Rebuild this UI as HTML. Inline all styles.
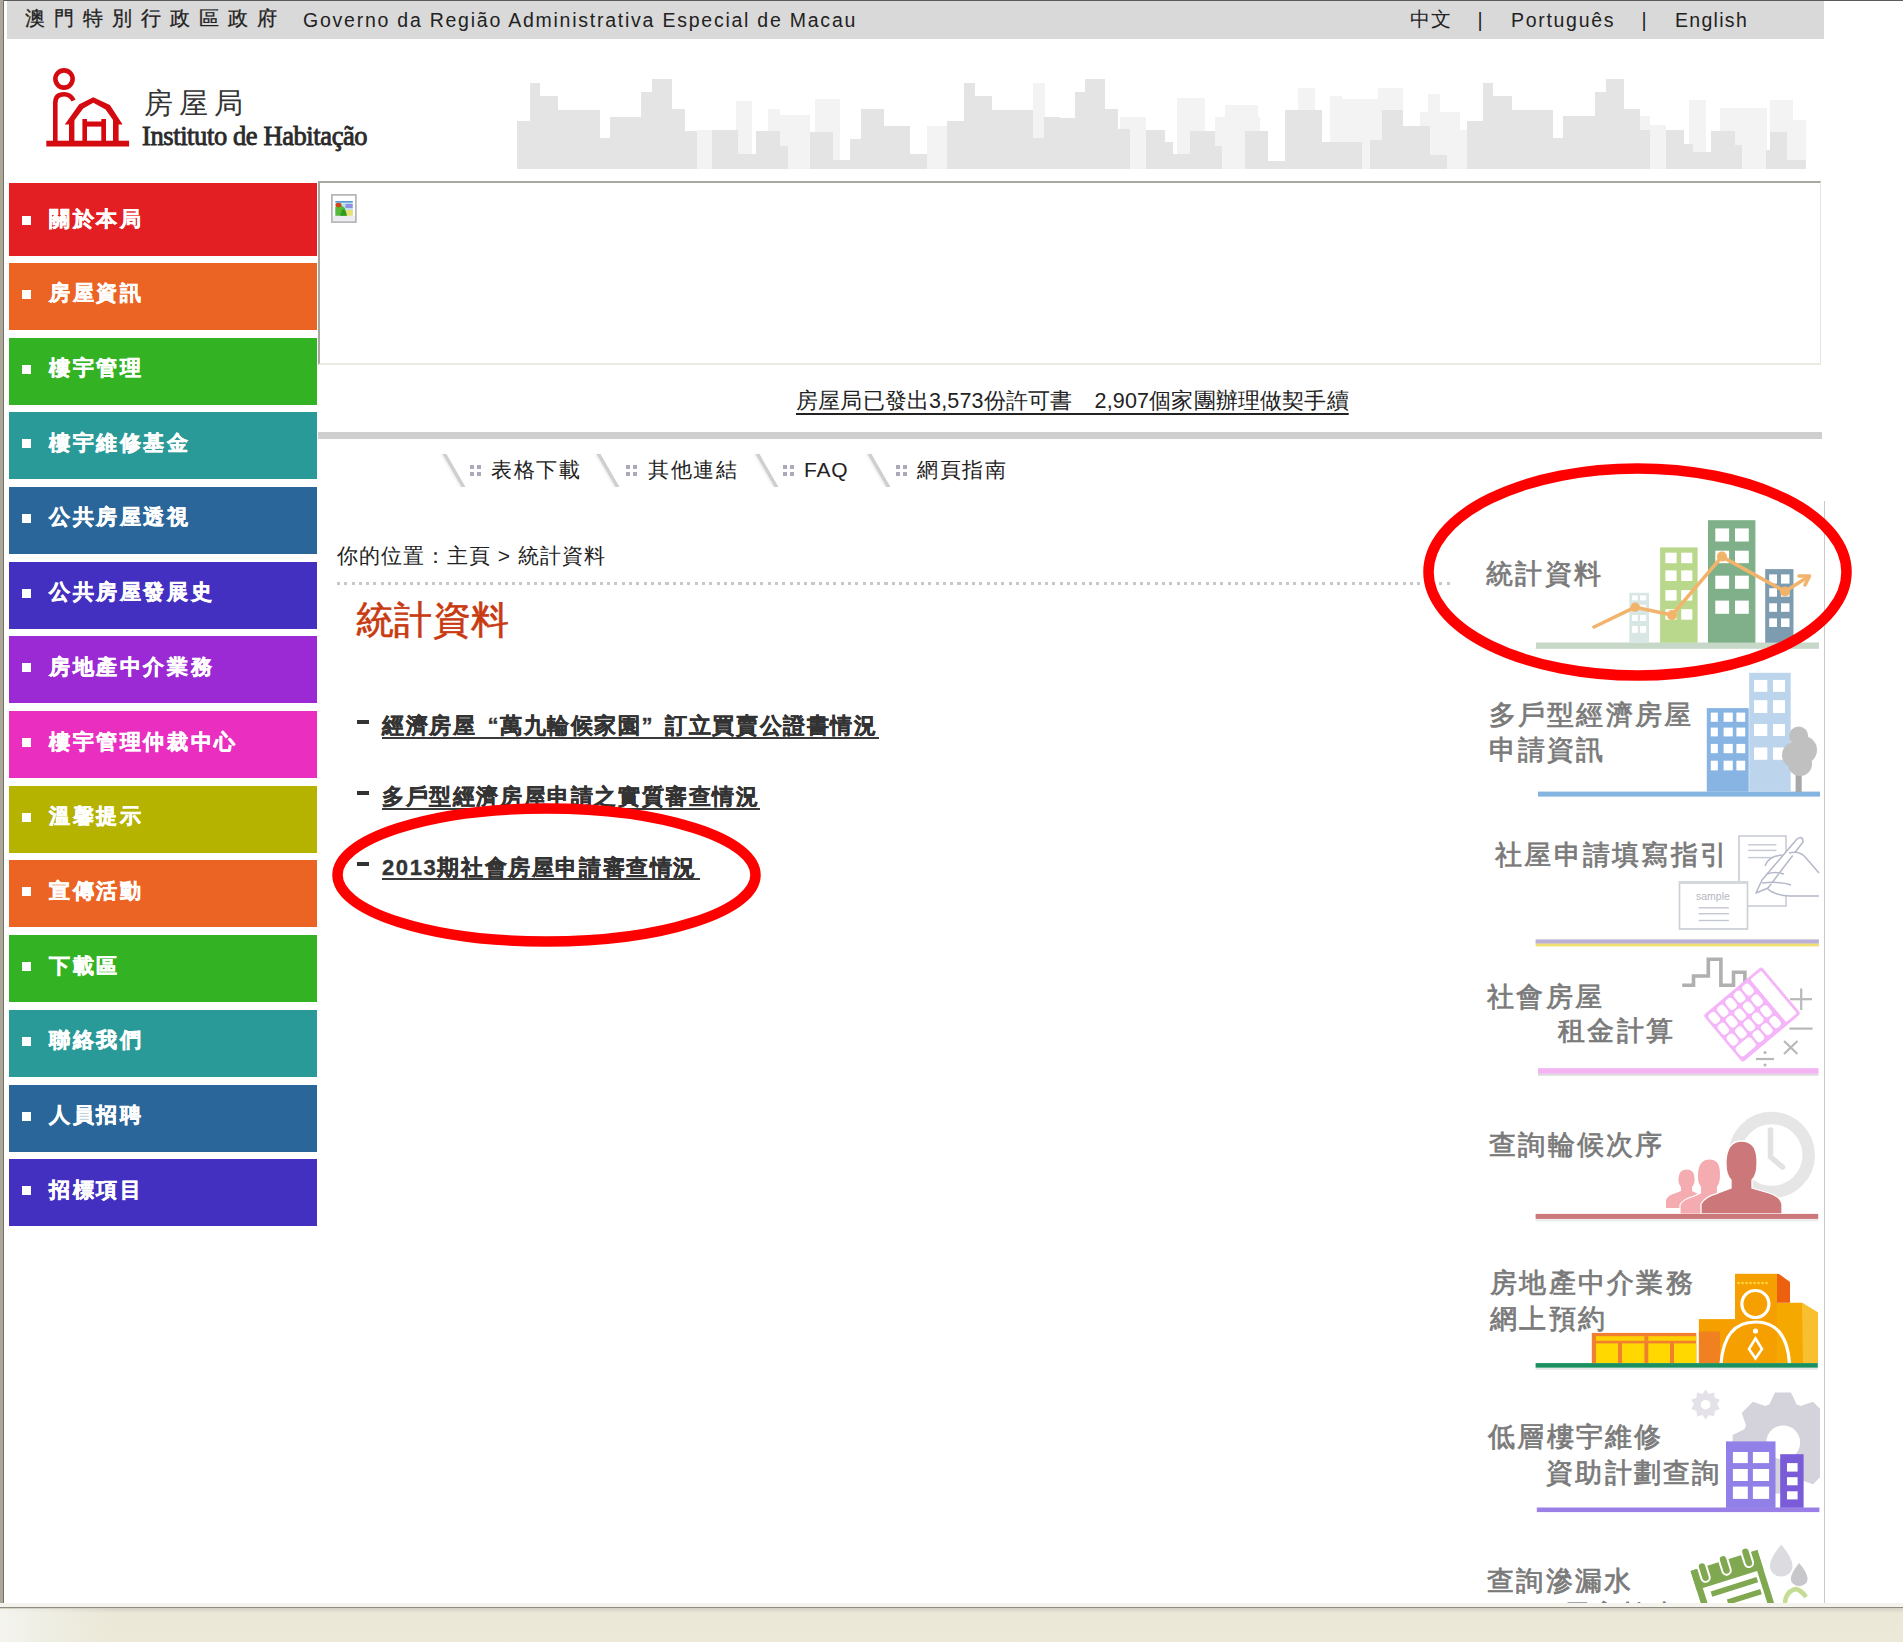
<!DOCTYPE html>
<html><head><meta charset="utf-8">
<style>
html,body{margin:0;padding:0;background:#fff;width:1903px;height:1642px;overflow:hidden;position:relative;font-family:"Liberation Sans",sans-serif;}
.a{position:absolute;white-space:nowrap;}
.mi{position:absolute;left:9px;width:308px;height:67px;}
.mi .b{position:absolute;left:13px;top:27px;width:9px;height:9px;background:#fff;}
.mi .t{position:absolute;left:40px;top:19.5px;font-size:21px;line-height:21px;font-weight:900;color:#fff;letter-spacing:2.6px;-webkit-text-stroke:0.45px #fff;}
.tab{position:absolute;top:459px;font-size:21px;line-height:21px;color:#222;letter-spacing:1.5px;}
.sl{position:absolute;width:3.6px;height:33px;top:454px;background:#cfcfcf;box-shadow:-2px 0 2px #f0f0f0;transform:skewX(30deg);}
.dots{position:absolute;width:11px;height:11px;background:
 radial-gradient(#aab 0,#aab 0) 0 0/4px 4px no-repeat,
 radial-gradient(#aab 0,#aab 0) 7px 0/4px 4px no-repeat,
 radial-gradient(#aab 0,#aab 0) 0 7px/4px 4px no-repeat,
 radial-gradient(#aab 0,#aab 0) 7px 7px/4px 4px no-repeat;}
.lnk{position:absolute;left:382px;font-size:22px;line-height:22px;font-weight:bold;color:#333;letter-spacing:1.6px;-webkit-text-stroke:0.35px #333;}
.ul{position:absolute;left:382px;height:2px;background:#3a3a3a;}
.q{display:inline-block;width:23.6px;}
.dash{position:absolute;left:357px;width:12px;height:4px;background:#333;}
.rt{position:absolute;font-size:27px;line-height:27px;color:#7a7a7a;-webkit-text-stroke:0.75px #7a7a7a;letter-spacing:2.3px;margin-top:1.5px;}
</style></head><body>

<!-- window top line and left frame -->
<div class="a" style="left:0;top:0;width:1903px;height:1px;background:#5a5a5a"></div>
<div class="a" style="left:0;top:0;width:2.5px;height:1603px;background:#aca899"></div>
<div class="a" style="left:2.5px;top:0;width:1.3px;height:1603px;background:#716f64"></div>

<!-- top gray bar -->
<div class="a" style="left:7px;top:1px;width:1817px;height:38px;background:#d9d9d9"></div>
<div class="a" style="left:25px;top:7px;font-size:20px;line-height:22px;color:#222;letter-spacing:9px;-webkit-text-stroke:0.3px #222">澳門特別行政區政府</div>
<div class="a" style="left:303px;top:8.5px;font-size:19.5px;line-height:22px;color:#222;letter-spacing:1.76px">Governo da Região Administrativa Especial de Macau</div>
<div class="a" style="left:1410px;top:8px;font-size:20px;line-height:22px;color:#222;letter-spacing:1px">中文</div>
<div class="a" style="left:1477.5px;top:8.5px;font-size:19.5px;line-height:22px;color:#222;">|</div>
<div class="a" style="left:1511px;top:8.5px;font-size:19.5px;line-height:22px;color:#222;letter-spacing:1.7px">Português</div>
<div class="a" style="left:1641.5px;top:8.5px;font-size:19.5px;line-height:22px;color:#222;">|</div>
<div class="a" style="left:1675px;top:8.5px;font-size:19.5px;line-height:22px;color:#222;letter-spacing:1.3px">English</div>

<!-- LOGO -->
<svg class="a" style="left:0;top:40px" width="500" height="140" viewBox="0 40 500 140">
 <g fill="none" stroke="#d50a10" stroke-width="4.6">
  <circle cx="64" cy="79" r="8.6"/>
  <path d="M55.3 142 V103 Q55.3 94.3 64 94.3 Q70.3 94.3 73.6 100.5"/>
 </g>
 <g fill="#d50a10">
  <polygon points="64.8,124.6 79.2,104.2 93.3,97.2 109.9,104.9 122.6,124.6 116.2,124.6 105.6,109.4 93.3,102.8 83.2,108.6 71.2,124.6"/>
  <rect x="69" y="120" width="5.4" height="22"/>
  <rect x="113" y="120" width="5.6" height="22"/>
  <rect x="82.4" y="119" width="4.6" height="23"/>
  <rect x="101.3" y="119" width="4.7" height="23"/>
  <rect x="84" y="121.5" width="20" height="5.1"/>
  <rect x="46.3" y="140.7" width="82.8" height="5.8"/>
 </g>
 <text x="143.5" y="112.7" font-family="Liberation Serif, serif" font-size="29" fill="#333" letter-spacing="6">房屋局</text>
 <text x="142" y="144.5" font-family="Liberation Serif" font-size="26.5" fill="#2a2a2a" stroke="#2a2a2a" stroke-width="0.85" letter-spacing="-0.4">Instituto de Habitação</text>
</svg>

<!-- SKYLINE -->
<svg class="a" style="left:0;top:0" width="1903" height="180">
 <g fill="#f3f3f3">
  <rect x="697" y="130" width="15" height="39"/><rect x="736" y="101" width="16" height="68"/><rect x="768" y="109" width="12" height="60"/>
  <rect x="780" y="115" width="30" height="54"/><rect x="815" y="99" width="25" height="70"/><rect x="927" y="126" width="20" height="43"/>
  <rect x="1033" y="83" width="12" height="86"/><rect x="1120" y="117" width="26" height="52"/><rect x="1177" y="98" width="28" height="71"/>
  <rect x="1225" y="105" width="33" height="64"/><rect x="1298" y="88" width="17" height="81"/><rect x="1330" y="96" width="12" height="73"/>
  <rect x="1340" y="99" width="38" height="70"/><rect x="1378" y="88" width="25" height="81"/><rect x="1420" y="112" width="40" height="57"/>
  <rect x="1428" y="94" width="12" height="75"/><rect x="1640" y="116" width="10" height="53"/><rect x="1689" y="100" width="17" height="69"/>
  <rect x="1720" y="108" width="47" height="61"/><rect x="1770" y="100" width="23" height="69"/><rect x="1460" y="130" width="7" height="39"/><rect x="1215" y="117" width="45" height="52"/><rect x="1640" y="125" width="26" height="44"/><rect x="1790" y="120" width="16" height="49"/>
 </g>
 <g fill="#e4e4e4">
  <rect x="517" y="121" width="13" height="48"/><rect x="530" y="83" width="10" height="86"/><rect x="540" y="96" width="18" height="73"/>
  <rect x="558" y="110" width="42" height="59"/><rect x="600" y="138" width="10" height="31"/><rect x="610" y="117" width="31" height="52"/>
  <rect x="641" y="92" width="11" height="77"/><rect x="652" y="79" width="20" height="90"/><rect x="672" y="109" width="13" height="60"/>
  <rect x="685" y="131" width="12" height="38"/><rect x="712" y="130" width="26" height="39"/><rect x="738" y="154" width="18" height="15"/>
  <rect x="756" y="131" width="24" height="38"/><rect x="780" y="146" width="8" height="23"/>
  <rect x="810" y="132" width="23" height="37"/><rect x="833" y="160" width="17" height="9"/><rect x="850" y="139" width="11" height="30"/>
  <rect x="861" y="109" width="23" height="60"/><rect x="884" y="126" width="26" height="43"/><rect x="910" y="154" width="17" height="15"/>
  <rect x="947" y="121" width="17" height="48"/><rect x="964" y="83" width="11" height="86"/><rect x="975" y="96" width="17" height="73"/>
  <rect x="992" y="110" width="41" height="59"/><rect x="1044" y="117" width="16" height="52"/><rect x="1033" y="138" width="11" height="31"/>
  <rect x="1060" y="118" width="15" height="51"/><rect x="1075" y="92" width="10" height="77"/><rect x="1085" y="79" width="20" height="90"/>
  <rect x="1105" y="109" width="13" height="60"/><rect x="1112" y="129" width="18" height="40"/><rect x="1146" y="130" width="19" height="39"/>
  <rect x="1165" y="142" width="8" height="27"/><rect x="1173" y="154" width="17" height="15"/><rect x="1190" y="131" width="25" height="38"/>
  <rect x="1215" y="146" width="7" height="23"/><rect x="1245" y="131" width="23" height="38"/><rect x="1268" y="161" width="17" height="8"/>
  <rect x="1285" y="110" width="37" height="59"/><rect x="1322" y="142" width="40" height="27"/><rect x="1370" y="140" width="12" height="29"/>
  <rect x="1382" y="110" width="21" height="59"/><rect x="1403" y="126" width="27" height="43"/><rect x="1430" y="155" width="17" height="14"/>
  <rect x="1467" y="121" width="16" height="48"/><rect x="1483" y="83" width="10" height="86"/><rect x="1493" y="96" width="19" height="73"/>
  <rect x="1512" y="110" width="41" height="59"/><rect x="1553" y="138" width="10" height="31"/><rect x="1563" y="116" width="32" height="53"/>
  <rect x="1595" y="92" width="11" height="77"/><rect x="1606" y="79" width="18" height="90"/><rect x="1624" y="109" width="16" height="60"/>
  <rect x="1632" y="130" width="18" height="39"/><rect x="1666" y="130" width="18" height="39"/><rect x="1684" y="144" width="9" height="25"/>
  <rect x="1693" y="152" width="18" height="17"/><rect x="1711" y="131" width="24" height="38"/><rect x="1735" y="145" width="7" height="24"/>
  <rect x="1766" y="150" width="4" height="19"/><rect x="1770" y="132" width="17" height="37"/><rect x="1787" y="160" width="19" height="9"/>
 </g>
</svg>

<!-- MENU -->
<div class="mi" style="top:183px;height:73px;background:#e31f23"><div class="b" style="top:33px"></div><div class="t" style="top:25px">關於本局</div></div>
<div class="mi" style="top:262.8px;background:#ec6424"><div class="b"></div><div class="t">房屋資訊</div></div>
<div class="mi" style="top:337.5px;background:#33b324"><div class="b"></div><div class="t">樓宇管理</div></div>
<div class="mi" style="top:412.2px;background:#2a9a98"><div class="b"></div><div class="t">樓宇維修基金</div></div>
<div class="mi" style="top:486.9px;background:#2a6699"><div class="b"></div><div class="t">公共房屋透視</div></div>
<div class="mi" style="top:561.6px;background:#4430c0"><div class="b"></div><div class="t">公共房屋發展史</div></div>
<div class="mi" style="top:636.3px;background:#9b2ad4"><div class="b"></div><div class="t">房地產中介業務</div></div>
<div class="mi" style="top:711.0px;background:#e92ec0"><div class="b"></div><div class="t">樓宇管理仲裁中心</div></div>
<div class="mi" style="top:785.7px;background:#b5b300"><div class="b"></div><div class="t">溫馨提示</div></div>
<div class="mi" style="top:860.4px;background:#ec6424"><div class="b"></div><div class="t">宣傳活動</div></div>
<div class="mi" style="top:935.1px;background:#33b324"><div class="b"></div><div class="t">下載區</div></div>
<div class="mi" style="top:1009.8px;background:#2a9a98"><div class="b"></div><div class="t">聯絡我們</div></div>
<div class="mi" style="top:1084.5px;background:#2a6699"><div class="b"></div><div class="t">人員招聘</div></div>
<div class="mi" style="top:1159.2px;background:#4430c0"><div class="b"></div><div class="t">招標項目</div></div>

<!-- BANNER BOX -->
<div class="a" style="left:318px;top:181px;width:1503px;height:184px;border-top:2px solid #a8a8a0;border-left:2px solid #a8a8a0;border-right:1px solid #e6e6dc;border-bottom:2px solid #ececE4;box-sizing:border-box"></div>
<svg class="a" style="left:331px;top:194px" width="26" height="29">
 <rect x="0.9" y="0.9" width="24" height="27.2" fill="#fff" stroke="#b0b0b0" stroke-width="1.6"/>
 <rect x="2" y="22" width="22" height="5" fill="#ececf2"/>
 <rect x="4.4" y="7" width="17.3" height="14.7" fill="#bfe0f4"/>
 <rect x="4.4" y="7" width="17.3" height="1.6" fill="#5a9ad0"/>
 <rect x="14.5" y="10" width="7.2" height="4" fill="#9090e0"/>
 <rect x="14.5" y="16" width="7.2" height="5.7" fill="#e8e070"/>
 <path d="M4.4 21.7 V13 Q9 9 14 14 L15 21.7 Z" fill="#58b838"/>
 <path d="M9 21.7 L11 16 Q13.5 14 15 18 L16 21.7 Z" fill="#2f9a20"/>
 <ellipse cx="7.5" cy="11" rx="3" ry="2.2" fill="#d04418"/>
</svg>
<!-- announcement -->
<div class="a" style="left:796px;top:389.5px;font-size:21.5px;line-height:22px;color:#222;letter-spacing:0.17px;text-decoration:underline;text-underline-offset:4.5px;text-decoration-thickness:1.5px">房屋局已發出3,573份許可書　2,907個家團辦理做契手續</div>

<!-- gray bar -->
<div class="a" style="left:318px;top:432px;width:1504px;height:7px;background:#cfcfcf"></div>

<!-- TABS -->
<div class="sl" style="left:451.7px"></div><div class="dots" style="left:470px;top:465px"></div><div class="tab" style="left:491px">表格下載</div>
<div class="sl" style="left:606.4px"></div><div class="dots" style="left:626px;top:465px"></div><div class="tab" style="left:648px">其他連結</div>
<div class="sl" style="left:765.2px"></div><div class="dots" style="left:783px;top:465px"></div><div class="tab" style="left:804px;letter-spacing:0.8px">FAQ</div>
<div class="sl" style="left:877.2px"></div><div class="dots" style="left:896px;top:465px"></div><div class="tab" style="left:917px">網頁指南</div>

<!-- breadcrumb -->
<div class="a" style="left:337px;top:545px;font-size:21px;line-height:22px;color:#222;letter-spacing:1px">你的位置：主頁 &gt; 統計資料</div>
<div class="a" style="left:337px;top:582px;width:1115px;height:3px;background:repeating-linear-gradient(90deg,#c8c8c8 0,#c8c8c8 3px,transparent 3px,transparent 7.3px)"></div>
<div class="a" style="left:356px;top:600.5px;font-size:38px;line-height:38px;color:#c83a10;-webkit-text-stroke:0.6px #c83a10;letter-spacing:0.3px">統計資料</div>

<!-- links -->
<div class="dash" style="top:720px"></div><div class="lnk" style="top:715px">經濟房屋<span class="q" style="text-align:right">“</span>萬九輪候家園<span class="q" style="text-align:left">”</span>訂立買賣公證書情況</div>
<div class="dash" style="top:791px"></div><div class="lnk" style="top:786px">多戶型經濟房屋申請之實質審查情況</div>
<div class="dash" style="top:862px"></div><div class="lnk" style="top:857px">2013期社會房屋申請審查情況</div>
<div class="ul" style="top:737px;width:497px"></div><div class="ul" style="top:807.5px;width:378px"></div><div class="ul" style="top:878.2px;width:318px"></div>

<!-- RIGHT PANEL -->
<div class="a" style="left:1824px;top:501px;width:1px;height:1102px;background:#c8c8c8"></div>


<!-- RIGHT PANEL CARDS -->
<div class="rt" style="left:1486px;top:559px">統計資料</div>
<div class="rt" style="left:1488.5px;top:700px">多戶型經濟房屋</div>
<div class="rt" style="left:1488.5px;top:735px">申請資訊</div>
<div class="rt" style="left:1495px;top:840px">社屋申請填寫指引</div>
<div class="rt" style="left:1487px;top:982px">社會房屋</div>
<div class="rt" style="left:1558px;top:1016px">租金計算</div>
<div class="rt" style="left:1489px;top:1130px">查詢輪候次序</div>
<div class="rt" style="left:1490px;top:1268px">房地產中介業務</div>
<div class="rt" style="left:1490px;top:1304px">網上預約</div>
<div class="rt" style="left:1488px;top:1422px">低層樓宇維修</div>
<div class="rt" style="left:1546px;top:1458px">資助計劃查詢</div>
<div class="a" style="left:1460px;top:1500px;width:364px;height:103px;overflow:hidden">
 <div class="rt" style="left:27px;top:66px">查詢滲漏水</div>
 <div class="rt" style="left:103px;top:100px">屋宇檢查</div>
</div>
<svg class="a" style="left:0;top:0" width="1903" height="1603">
 <!-- card1 stats -->
 <rect x="1536" y="642.5" width="283" height="6.3" fill="#c8d8c8"/>
 <rect x="1629.3" y="592.8" width="19.7" height="50" fill="#d8e6e4"/>
 <g fill="#fff"><rect x="1632" y="595.4" width="5.8" height="5"/><rect x="1640" y="595.4" width="6.2" height="5"/><rect x="1632" y="604.6" width="5.8" height="5.4"/><rect x="1640" y="604.6" width="6.2" height="5.4"/><rect x="1632" y="615" width="5.8" height="6"/><rect x="1640" y="615" width="6.2" height="6"/><rect x="1632" y="626" width="5.8" height="6.8"/><rect x="1640" y="626" width="6.2" height="6.8"/></g>
 <rect x="1660.1" y="547.4" width="37.5" height="95.3" fill="#bad88c"/>
 <g fill="#fff"><rect x="1665.4" y="552.7" width="11.2" height="10.5"/><rect x="1681.2" y="552.7" width="11.1" height="10.5"/><rect x="1665.4" y="570.4" width="11.2" height="10.6"/><rect x="1681.2" y="570.4" width="11.1" height="10.6"/><rect x="1665.4" y="590.1" width="11.2" height="10.5"/><rect x="1681.2" y="590.1" width="11.1" height="10.5"/><rect x="1665.4" y="609.2" width="11.2" height="10.5"/><rect x="1681.2" y="609.2" width="11.1" height="10.5"/></g>
 <rect x="1708" y="520.2" width="47.4" height="122.5" fill="#80b08a"/>
 <g fill="#fff"><rect x="1715.3" y="528.4" width="13.8" height="13.1"/><rect x="1735" y="528.4" width="13.8" height="13.1"/><rect x="1715.3" y="550.7" width="13.8" height="12.5"/><rect x="1735" y="550.7" width="13.8" height="12.5"/><rect x="1715.3" y="575.7" width="13.8" height="13.1"/><rect x="1735" y="575.7" width="13.8" height="13.1"/><rect x="1715.3" y="600.6" width="13.8" height="13.2"/><rect x="1735" y="600.6" width="13.8" height="13.2"/></g>
 <rect x="1765.2" y="569.1" width="28.3" height="73.6" fill="#7e9cb0"/>
 <g fill="#fff"><rect x="1769.2" y="574.4" width="7.8" height="9.2"/><rect x="1781" y="574.4" width="8.5" height="9.2"/><rect x="1769.2" y="588.2" width="7.8" height="8.5"/><rect x="1781" y="588.2" width="8.5" height="8.5"/><rect x="1769.2" y="603.3" width="7.8" height="8.5"/><rect x="1781" y="603.3" width="8.5" height="8.5"/><rect x="1769.2" y="618.4" width="7.8" height="8.6"/><rect x="1781" y="618.4" width="8.5" height="8.6"/></g>
 <g stroke="#f2b46c" fill="none" stroke-width="3.6" stroke-linejoin="round" stroke-linecap="round"><polyline points="1594,627 1635.2,607.2 1672,615.1 1721.9,556.6 1785,591.5 1807,577.5"/><polyline points="1799,576 1809.5,576 1805,585"/></g>
 <g fill="#f2b36a"><circle cx="1635.2" cy="607.2" r="4.6"/><circle cx="1672" cy="615.1" r="5"/><circle cx="1721.9" cy="556.6" r="5"/><circle cx="1785" cy="591.5" r="5"/></g>

 <!-- card2 buildings -->
 <rect x="1538" y="791.6" width="282" height="5" fill="#86b4e0"/>
 <rect x="1749.2" y="672.8" width="41.5" height="119" fill="#bcd4ec"/>
 <g fill="#fff"><rect x="1754" y="679.9" width="13.3" height="11.9"/><rect x="1773" y="679.9" width="12" height="11.9"/><rect x="1754" y="700.2" width="13.3" height="12.8"/><rect x="1773" y="700.2" width="12" height="12.8"/><rect x="1754" y="724" width="13.3" height="12"/><rect x="1773" y="724" width="12" height="12"/><rect x="1754" y="747.5" width="13.3" height="12.3"/><rect x="1773" y="747.5" width="12" height="12.3"/></g>
 <rect x="1706.8" y="708.1" width="41.9" height="83.6" fill="#88b4e4"/>
 <g fill="#fff"><rect x="1710.8" y="712.6" width="7" height="9.2"/><rect x="1723.6" y="712.6" width="9.2" height="9.2"/><rect x="1736.4" y="712.6" width="8.8" height="9.2"/><rect x="1710.8" y="727.6" width="7" height="8.8"/><rect x="1723.6" y="727.6" width="9.2" height="8.8"/><rect x="1736.4" y="727.6" width="8.8" height="8.8"/><rect x="1710.8" y="743.9" width="7" height="9.3"/><rect x="1723.6" y="743.9" width="9.2" height="9.3"/><rect x="1736.4" y="743.9" width="8.8" height="9.3"/><rect x="1710.8" y="760.7" width="7" height="9.7"/><rect x="1723.6" y="760.7" width="9.2" height="9.7"/><rect x="1736.4" y="760.7" width="8.8" height="9.7"/></g>
 <rect x="1795.6" y="750" width="6.1" height="42" fill="#a8a8a8"/>
 <g fill="#c0c0c0"><circle cx="1798.7" cy="736" r="9.5"/><circle cx="1803" cy="750" r="14"/><circle cx="1795" cy="755" r="13"/><circle cx="1800" cy="764" r="12"/></g>

 <!-- card3 papers -->
 <rect x="1535.6" y="939.4" width="283.3" height="4.4" fill="#bab0d8"/>
 <rect x="1535.6" y="943.6" width="283.3" height="2.8" fill="#f0e070"/>
 <g fill="#fff" stroke="#c8ccd4" stroke-width="1.6"><rect x="1739" y="836" width="47" height="70"/></g>
 <g stroke="#c8ccd4" stroke-width="1.5"><line x1="1748.2" y1="844.8" x2="1776.4" y2="844.8"/><line x1="1748.2" y1="850.4" x2="1776.4" y2="850.4"/><line x1="1748.2" y1="857.6" x2="1778.5" y2="857.6"/></g>
 <rect x="1679.5" y="882" width="68" height="47" fill="#fff" stroke="#ccd0d6" stroke-width="1.7"/>
 <rect x="1679" y="881" width="69" height="3" fill="#d4d8dc"/>
 <text x="1696" y="900" font-family="Liberation Sans" font-size="10.5" fill="#b4b8c0">sample</text>
 <g stroke="#c4c8d0" stroke-width="1.4"><line x1="1698.6" y1="907.8" x2="1728.9" y2="907.8"/><line x1="1698.6" y1="913.7" x2="1728.9" y2="913.7"/><line x1="1698.6" y1="920.5" x2="1728.9" y2="920.5"/></g>
 <polygon points="1756,893 1762,878 1768,862 1773,857 1784,855 1800,851 1807,854 1819,869 1819,895 1797,891 1775,893.5 1768,885" fill="#fff"/>
 <g fill="#fff" stroke="#b4b8c8" stroke-width="1.5" stroke-linejoin="round">
  <path d="M1756 893 L1762 880 L1797 839 Q1803 835 1803 842 L1768 888 Z"/>
  <path d="M1789 853 Q1800 850 1806 858 L1819 873"/>
  <path d="M1767 874 Q1775 871 1784 874 M1762 883 Q1780 881 1791 885 M1767 888 Q1773 895 1790 896 L1819 896"/>
  <path d="M1765 866 Q1768 856 1782 855"/>
 </g>

 <!-- card4 calculator -->
 <rect x="1538" y="1068.2" width="280.5" height="5.6" fill="#f4b4f4"/>
 <rect x="1538" y="1073.8" width="280.5" height="2" fill="#dcdcdc"/>
 <polyline points="1682.2,985.3 1693.5,985.3 1693.5,976 1708.3,976 1708.3,959.3 1720.9,959.3 1720.9,985.3 1733.5,985.3 1733.5,972.3 1744.9,972.3 1744.9,983.2" fill="none" stroke="#b0b0b0" stroke-width="3.6"/>
 <g transform="translate(1752,1014.5) rotate(50)">
  <rect x="-30.7" y="-38" width="61.4" height="76" rx="3" fill="#f4b6f8"/>
  <rect x="-27.8" y="-35.2" width="55.6" height="14" rx="1.5" fill="#fff"/>
  <g fill="#fff"><rect x="-27.6" y="-17.2" width="12" height="8.6" rx="3.5"/><rect x="-13.5" y="-17.2" width="12" height="8.6" rx="3.5"/><rect x="0.6" y="-17.2" width="12" height="8.6" rx="3.5"/><rect x="14.7" y="-17.2" width="12" height="8.6" rx="3.5"/><rect x="-27.6" y="-6.2" width="12" height="8.6" rx="3.5"/><rect x="-13.5" y="-6.2" width="12" height="8.6" rx="3.5"/><rect x="0.6" y="-6.2" width="12" height="8.6" rx="3.5"/><rect x="14.7" y="-6.2" width="12" height="8.6" rx="3.5"/><rect x="-27.6" y="4.8" width="12" height="8.6" rx="3.5"/><rect x="-13.5" y="4.8" width="12" height="8.6" rx="3.5"/><rect x="0.6" y="4.8" width="12" height="8.6" rx="3.5"/><rect x="14.7" y="4.8" width="12" height="8.6" rx="3.5"/><rect x="-27.6" y="15.8" width="12" height="8.6" rx="3.5"/><rect x="-13.5" y="15.8" width="12" height="8.6" rx="3.5"/><rect x="0.6" y="15.8" width="12" height="8.6" rx="3.5"/><rect x="14.7" y="15.8" width="12" height="19.6" rx="3.5"/><rect x="-27.6" y="26.8" width="12" height="8.6" rx="3.5"/><rect x="-13.5" y="26.8" width="12" height="8.6" rx="3.5"/><rect x="0.6" y="26.8" width="12" height="8.6" rx="3.5"/></g>
 </g>
 <g stroke="#b8b8b8" stroke-width="2.2"><line x1="1801.2" y1="988.5" x2="1801.2" y2="1010"/><line x1="1790" y1="999.2" x2="1812" y2="999.2"/><line x1="1789.4" y1="1028.6" x2="1812.6" y2="1028.6"/><line x1="1784" y1="1041" x2="1797.5" y2="1054"/><line x1="1797.5" y1="1041" x2="1784" y2="1054"/><line x1="1756" y1="1059" x2="1774" y2="1059"/></g>
 <g fill="#b8b8b8"><circle cx="1765" cy="1052.5" r="1.6"/><circle cx="1765" cy="1065" r="1.6"/></g>

 <!-- card5 queue -->
 <circle cx="1771.7" cy="1155" r="37" fill="none" stroke="#e6e6e6" stroke-width="12.5"/>
 <polyline points="1770.5,1130 1770.5,1157 1782.5,1167" fill="none" stroke="#e2e2e2" stroke-width="5.5" stroke-linecap="round"/>
 <rect x="1535.6" y="1218.9" width="282.6" height="2.5" fill="#ececec"/>
 <g fill="#f5acb0">
  <path d="M1666 1208 L1666 1200 Q1668 1195 1676 1193 L1681 1191 L1681 1187 Q1678 1184 1678.5 1178 Q1679 1169.5 1686.5 1169.5 Q1694.5 1169.5 1694.5 1178 Q1695 1184 1692 1187 L1692 1191 L1700 1195 L1700 1208 Z"/>
  <path d="M1680 1214 L1680 1205 Q1683 1199 1693 1196.5 L1700.5 1193 L1700.5 1187 Q1696.5 1183 1697.5 1173 Q1698.5 1159 1709.5 1159 Q1720.5 1159 1720.5 1173 Q1721 1183 1717.5 1187 L1717.5 1193 L1730 1200 L1730 1214 Z" stroke="#fff" stroke-width="1.2"/>
 </g>
 <path d="M1701 1214 L1701 1204 Q1704 1197 1718 1193 L1731 1188 L1731 1180 Q1725.5 1175 1726 1161 Q1727 1141 1741.5 1141 Q1757 1141 1757 1161 Q1757.5 1175 1752 1180 L1752 1188 L1769 1193 Q1781 1197 1782 1204 L1782 1214 Z" fill="#cc787a" stroke="#fff" stroke-width="1.3"/>

 <rect x="1535.6" y="1213.9" width="282.6" height="5" fill="#cc787a"/>
 <!-- card6 estate -->
 <polygon points="1777,1302.7 1802,1302.7 1817.8,1312.5 1817.8,1363.1 1777,1363.1" fill="#f5a800"/>
 <polygon points="1802,1302.7 1817.8,1312.5 1817.8,1363.1 1803,1363.1" fill="#f8c030"/>
 <path d="M1777 1274 L1779 1274 L1790 1282 L1790 1302.7 L1777 1302.7 Z" fill="#ec6010"/>
 <rect x="1735" y="1273.8" width="42" height="89.3" fill="#f5a000"/>
 <g fill="#ffd840"><circle cx="1738.5" cy="1283" r="1.3"/><circle cx="1742.5" cy="1283" r="1.3"/><circle cx="1746.5" cy="1283" r="1.3"/><circle cx="1750.5" cy="1283" r="1.3"/><circle cx="1754.5" cy="1283" r="1.3"/><circle cx="1758.5" cy="1283" r="1.3"/><circle cx="1762.5" cy="1283" r="1.3"/><circle cx="1766.5" cy="1283" r="1.3"/></g>
 <rect x="1698.9" y="1319.1" width="36.1" height="44" fill="#f5a000"/>
 <rect x="1698.9" y="1331.6" width="21" height="31.5" fill="#f08020"/>
 <rect x="1591.8" y="1332.9" width="104.5" height="30.2" fill="#f08030"/>
 <rect x="1596" y="1336.2" width="100.3" height="4.6" fill="#ffd000"/>
 <g fill="#ffd800"><rect x="1596" y="1343.4" width="22" height="19.7"/><rect x="1622" y="1343.4" width="22.4" height="19.7"/><rect x="1648.3" y="1343.4" width="21.7" height="19.7"/><rect x="1674" y="1343.4" width="22.3" height="19.7"/></g>
 <rect x="1644.4" y="1336.2" width="3.9" height="4.6" fill="#f08030"/>
 <g fill="none" stroke="#fff" stroke-width="3.2"><circle cx="1755.4" cy="1304" r="13.5"/><path d="M1721 1364 Q1724 1322 1755.5 1322 Q1787 1322 1789.5 1364"/><path d="M1755.5 1338.5 L1762 1349 L1755.5 1358.5 L1749 1349 Z" stroke-width="2.6"/></g>
 <circle cx="1755.5" cy="1331" r="2.6" fill="#fff"/>
 <rect x="1535.6" y="1363.1" width="282.2" height="4.7" fill="#1a9060"/>
 <rect x="1535.6" y="1367.8" width="282.2" height="2" fill="#e8e8e8"/>

 <!-- card7 maintenance -->
 <defs><clipPath id="gclip"><rect x="1690" y="1380" width="130" height="128"/></clipPath></defs>
 <g clip-path="url(#gclip)"><polygon points="1769.3,1404.4 1775.0,1392.6 1791.0,1392.6 1796.7,1404.4 1800.7,1406.0 1813.0,1401.7 1824.3,1413.0 1820.0,1425.3 1821.6,1429.3 1833.4,1435.0 1833.4,1451.0 1821.6,1456.7 1820.0,1460.7 1824.3,1473.0 1813.0,1484.3 1800.7,1480.0 1796.7,1481.6 1791.0,1493.4 1775.0,1493.4 1769.3,1481.6 1765.3,1480.0 1753.0,1484.3 1741.7,1473.0 1746.0,1460.7 1744.4,1456.7 1732.6,1451.0 1732.6,1435.0 1744.4,1429.3 1746.0,1425.3 1741.7,1413.0 1753.0,1401.7 1765.3,1406.0" fill="#d4d2da"/><circle cx="1783.2" cy="1442.5" r="17" fill="#fff"/></g>
 <g fill="#e4e2e8"><path d="M1705.6 1389.4 l3.2 4.5 l5.3 -1.5 l0.7 5.4 l5.2 1.9 l-2.9 4.7 l2.9 4.7 l-5.2 1.9 l-0.7 5.4 l-5.3 -1.5 l-3.2 4.5 l-3.2 -4.5 l-5.3 1.5 l-0.7 -5.4 l-5.2 -1.9 l2.9 -4.7 l-2.9 -4.7 l5.2 -1.9 l0.7 -5.4 l5.3 1.5 Z"/></g>
 <circle cx="1705.6" cy="1404.7" r="4.8" fill="#fff"/>
 <rect x="1536.8" y="1507.5" width="282.6" height="4.6" fill="#9a80e6"/>
 <rect x="1726" y="1441.4" width="49.5" height="66.5" fill="#9080e8"/>
 <g fill="#fff"><rect x="1732.9" y="1452" width="14.9" height="11.1"/><rect x="1752.9" y="1452" width="16.2" height="11.1"/><rect x="1732.9" y="1469" width="14.9" height="12"/><rect x="1752.9" y="1469" width="16.2" height="12"/><rect x="1732.9" y="1486.6" width="14.9" height="12.3"/><rect x="1752.9" y="1486.6" width="16.2" height="12.3"/></g>
 <rect x="1780.2" y="1454.2" width="23.4" height="53.5" fill="#7a5cd8"/>
 <g fill="#fff"><rect x="1787" y="1463.1" width="10.6" height="8.5"/><rect x="1787" y="1477.2" width="10.6" height="8.1"/><rect x="1787" y="1491.3" width="10.6" height="8.1"/></g>

 <!-- card8 clipboard (clipped) -->
 <g fill="#dcdce0"><path d="M1781.2 1544.6 Q1792.5 1558 1792.5 1566 A11.3 10.5 0 0 1 1769.9 1566 Q1769.9 1558 1781.2 1544.6 Z"/></g>
 <g fill="#c8c8cc"><path d="M1799.2 1563 Q1807.6 1573 1807.6 1579 A8.4 7.2 0 0 1 1790.8 1579 Q1790.8 1573 1799.2 1563 Z"/></g>
 <g transform="translate(1690.6,1571) rotate(-17.5)" fill="#80a850">
  <rect x="0" y="0" width="70" height="20"/>
  <rect x="0" y="0" width="6.5" height="60"/>
  <rect x="63.5" y="0" width="6.5" height="60"/>
  <rect x="13" y="25.5" width="48" height="5.5"/>
  <rect x="26" y="38" width="35" height="5.5"/>
  <g stroke="#fff" stroke-width="2"><rect x="8" y="-5" width="8.5" height="20" rx="4.2"/><rect x="30.2" y="-5.5" width="8.5" height="20" rx="4.2"/><rect x="53.8" y="-6" width="8.5" height="20" rx="4.2"/></g>
 </g>
 <path d="M1785 1603 Q1786 1591 1796 1589 Q1802 1591 1806 1597" fill="none" stroke="#c4dc94" stroke-width="4.5"/>
</svg>

<!-- status bar -->
<div class="a" style="left:0;top:1603px;width:1903px;height:4px;background:#f4f3ee"></div>
<div class="a" style="left:0;top:1607px;width:1903px;height:1px;background:#8f8d80"></div>
<div class="a" style="left:0;top:1608px;width:1903px;height:34px;background:linear-gradient(180deg,#d4d0c4 0,#ebe8d8 5px,#ece9d8 100%)"></div>
<div class="a" style="left:0;top:1609px;width:110px;height:33px;background:linear-gradient(90deg,rgba(244,244,240,0.95) 0,rgba(240,240,232,0.6) 50%,rgba(236,233,216,0) 100%)"></div>

<!-- RED ELLIPSES -->
<svg class="a" style="left:0;top:0" width="1903" height="1642">
 <ellipse cx="1637.5" cy="572" rx="209" ry="103.5" fill="none" stroke="#f00" stroke-width="10.5"/>
 <ellipse cx="546.5" cy="875" rx="209" ry="66.5" fill="none" stroke="#f00" stroke-width="10.5"/>
</svg>

</body></html>
